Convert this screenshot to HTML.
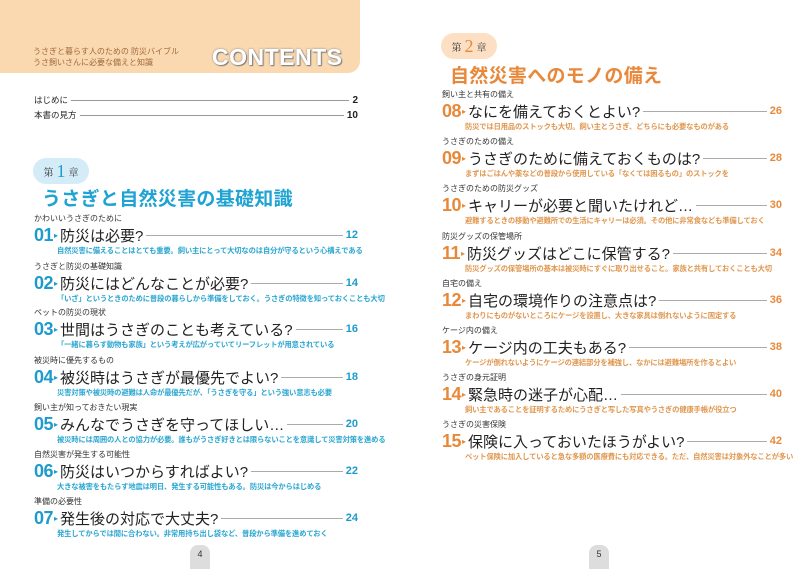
<!DOCTYPE html>
<html><head><meta charset="utf-8"><style>
*{margin:0;padding:0;box-sizing:border-box}
body{width:800px;height:565px;background:#fff;position:relative;overflow:hidden;font-family:"Liberation Sans","Noto Sans CJK JP",sans-serif;color:#222}
.hdr{position:absolute;left:0;top:0;width:360px;height:73px;background:#fbd9b0;border-bottom-right-radius:12px}
.hsub{position:absolute;left:33px;top:46px;font-size:8px;line-height:11px;color:#a0683a}
.cont{position:absolute;left:212px;top:44px;font-size:23px;font-weight:bold;color:#fff;letter-spacing:0.5px;text-shadow:0 0 2px #888,1px 1px 1px #777}
.toc{position:absolute;left:34px;width:324px;display:flex;align-items:center;font-size:8.5px}
.toc .ln{flex:1;border-top:1px solid #999;margin:0 3px}
.toc b{font-size:10px}
.e{position:absolute;height:40px}
.e .lb{font-size:8px;line-height:10px;color:#333}
.e .t{display:flex;align-items:center;height:22px}
.e .n{font-size:18px;font-weight:bold;letter-spacing:-0.5px}
.e .ar{font-size:8px;margin:0 2px 0 1px}
.e .tt{font-size:15px;color:#222;white-space:nowrap}
.e .ln{flex:1;border-top:1.5px solid #aaa;margin:0 3px}
.e .p{font-size:11px;font-weight:bold}
.e .s{font-size:7.3px;letter-spacing:-0.15px;font-weight:bold;line-height:10px;padding-left:23px;white-space:nowrap}
.L{left:34px;width:324px}
.R{left:442px;width:340px}
.L .n,.L .ar,.L .p{color:#1d9bcc}.L .s{color:#2aa6d0}
.R .n,.R .ar,.R .p{color:#e8893a}.R .s{color:#e0974f}
.ch{position:absolute;border-radius:14px;width:56px;height:26px;font-size:10px;display:flex;align-items:center;justify-content:center;font-family:"Liberation Serif","Noto Serif CJK SC",serif}
.ch i{font-style:normal;font-size:18px;margin:0 3px}
.big{position:absolute;font-size:19px;font-weight:bold;letter-spacing:0.3px}
.tab{position:absolute;top:545px;width:20px;height:24px;background:#ddd;border-radius:8px 8px 0 0;font-size:9px;text-align:center;padding-top:4px;color:#333}
</style></head><body>
<div class="hdr"></div>
<div class="hsub">うさぎと暮らす人のための 防災バイブル<br>うさ飼いさんに必要な備えと知識</div>
<div class="cont">CONTENTS</div>
<div class="toc" style="top:94px">はじめに<span class="ln"></span><b>2</b></div>
<div class="toc" style="top:109px">本書の見方<span class="ln"></span><b>10</b></div>

<div class="ch" style="left:33px;top:158px;background:#d4ecf8;color:#333">第<i style="color:#1d9bcc">1</i>章</div>
<div class="big" style="left:42px;top:184px;color:#1fa3d3">うさぎと自然災害の基礎知識</div>

<div class="ch" style="left:441px;top:33px;background:#fde0c4;color:#333">第<i style="color:#e8893a">2</i>章</div>
<div class="big" style="left:450px;top:61px;color:#e8883a">自然災害へのモノの備え</div>

<div class="e L" style="top:214px"><div class="lb">かわいいうさぎのために</div><div class="t"><span class="n">01</span><span class="ar">▸</span><span class="tt">防災は必要?</span><span class="ln"></span><span class="p">12</span></div><div class="s">自然災害に備えることはとても重要。飼い主にとって大切なのは自分が守るという心構えである</div></div>
<div class="e L" style="top:262px"><div class="lb">うさぎと防災の基礎知識</div><div class="t"><span class="n">02</span><span class="ar">▸</span><span class="tt">防災にはどんなことが必要?</span><span class="ln"></span><span class="p">14</span></div><div class="s">「いざ」というときのために普段の暮らしから準備をしておく。うさぎの特徴を知っておくことも大切</div></div>
<div class="e L" style="top:308px"><div class="lb">ペットの防災の現状</div><div class="t"><span class="n">03</span><span class="ar">▸</span><span class="tt">世間はうさぎのことも考えている?</span><span class="ln"></span><span class="p">16</span></div><div class="s">「一緒に暮らす動物も家族」という考えが広がっていてリーフレットが用意されている</div></div>
<div class="e L" style="top:356px"><div class="lb">被災時に優先するもの</div><div class="t"><span class="n">04</span><span class="ar">▸</span><span class="tt">被災時はうさぎが最優先でよい?</span><span class="ln"></span><span class="p">18</span></div><div class="s">災害対策や被災時の避難は人命が最優先だが、「うさぎを守る」という強い意志も必要</div></div>
<div class="e L" style="top:403px"><div class="lb">飼い主が知っておきたい現実</div><div class="t"><span class="n">05</span><span class="ar">▸</span><span class="tt">みんなでうさぎを守ってほしい…</span><span class="ln"></span><span class="p">20</span></div><div class="s">被災時には周囲の人との協力が必要。誰もがうさぎ好きとは限らないことを意識して災害対策を進める</div></div>
<div class="e L" style="top:450px"><div class="lb">自然災害が発生する可能性</div><div class="t"><span class="n">06</span><span class="ar">▸</span><span class="tt">防災はいつからすればよい?</span><span class="ln"></span><span class="p">22</span></div><div class="s">大きな被害をもたらす地震は明日、発生する可能性もある。防災は今からはじめる</div></div>
<div class="e L" style="top:497px"><div class="lb">準備の必要性</div><div class="t"><span class="n">07</span><span class="ar">▸</span><span class="tt">発生後の対応で大丈夫?</span><span class="ln"></span><span class="p">24</span></div><div class="s">発生してからでは間に合わない。非常用持ち出し袋など、普段から準備を進めておく</div></div>

<div class="e R" style="top:90px"><div class="lb">飼い主と共有の備え</div><div class="t"><span class="n">08</span><span class="ar">▸</span><span class="tt">なにを備えておくとよい?</span><span class="ln"></span><span class="p">26</span></div><div class="s">防災では日用品のストックも大切。飼い主とうさぎ、どちらにも必要なものがある</div></div>
<div class="e R" style="top:137px"><div class="lb">うさぎのための備え</div><div class="t"><span class="n">09</span><span class="ar">▸</span><span class="tt">うさぎのために備えておくものは?</span><span class="ln"></span><span class="p">28</span></div><div class="s">まずはごはんや薬などの普段から使用している「なくては困るもの」のストックを</div></div>
<div class="e R" style="top:184px"><div class="lb">うさぎのための防災グッズ</div><div class="t"><span class="n">10</span><span class="ar">▸</span><span class="tt">キャリーが必要と聞いたけれど…</span><span class="ln"></span><span class="p">30</span></div><div class="s">避難するときの移動や避難所での生活にキャリーは必須。その他に非常食なども準備しておく</div></div>
<div class="e R" style="top:232px"><div class="lb">防災グッズの保管場所</div><div class="t"><span class="n">11</span><span class="ar">▸</span><span class="tt">防災グッズはどこに保管する?</span><span class="ln"></span><span class="p">34</span></div><div class="s">防災グッズの保管場所の基本は被災時にすぐに取り出せること。家族と共有しておくことも大切</div></div>
<div class="e R" style="top:279px"><div class="lb">自宅の備え</div><div class="t"><span class="n">12</span><span class="ar">▸</span><span class="tt">自宅の環境作りの注意点は?</span><span class="ln"></span><span class="p">36</span></div><div class="s">まわりにものがないところにケージを設置し、大きな家具は倒れないように固定する</div></div>
<div class="e R" style="top:326px"><div class="lb">ケージ内の備え</div><div class="t"><span class="n">13</span><span class="ar">▸</span><span class="tt">ケージ内の工夫もある?</span><span class="ln"></span><span class="p">38</span></div><div class="s">ケージが倒れないようにケージの連結部分を補強し、なかには避難場所を作るとよい</div></div>
<div class="e R" style="top:373px"><div class="lb">うさぎの身元証明</div><div class="t"><span class="n">14</span><span class="ar">▸</span><span class="tt">緊急時の迷子が心配…</span><span class="ln"></span><span class="p">40</span></div><div class="s">飼い主であることを証明するためにうさぎと写した写真やうさぎの健康手帳が役立つ</div></div>
<div class="e R" style="top:420px"><div class="lb">うさぎの災害保険</div><div class="t"><span class="n">15</span><span class="ar">▸</span><span class="tt">保険に入っておいたほうがよい?</span><span class="ln"></span><span class="p">42</span></div><div class="s">ペット保険に加入していると急な多額の医療費にも対応できる。ただ、自然災害は対象外なことが多い</div></div>

<div class="tab" style="left:190px">4</div>
<div class="tab" style="left:589px">5</div>
</body></html>
